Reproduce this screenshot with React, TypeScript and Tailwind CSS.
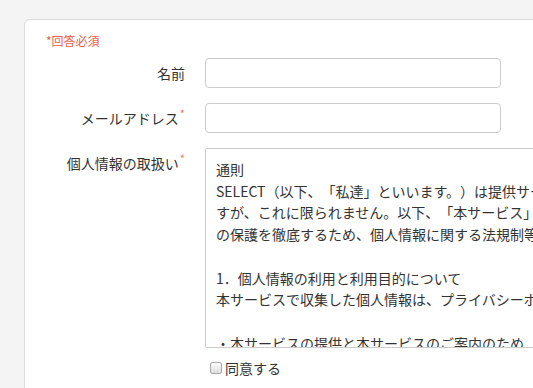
const policyText = [
  "通則",
  "SELECT（以下、「私達」といいます。）は提供サービス（ウェブサイト、アプリケーション等を含みま",
  "すが、これに限られません。以下、「本サービス」といいます。）において、利用者の個人情報",
  "の保護を徹底するため、個人情報に関する法規制等を遵守します。",
  "",
  "1．個人情報の利用と利用目的について",
  "本サービスで収集した個人情報は、プライバシーポリシーに定める以下の目的で利用します。",
  "",
  "・本サービスの提供と本サービスのご案内のため",
  "・お問い合わせへの対応のため",
].join("\n");

const Req = () => (
  <span className="relative -top-[6px] ml-[1px] text-[11px] leading-none text-[#ef7b68]">*</span>
);

const Label = ({ text, required }: { text: string; required?: boolean }) => (
  <div className="w-[139px] shrink-0 pt-[5px] text-right text-[14px] leading-[20px] text-[#333]">
    {text}
    {required && <Req />}
  </div>
);

export default function App() {
  return (
    <div
      className="h-screen w-screen overflow-hidden bg-[#f4f4f4] pt-[19px] pl-[24px] [text-spacing-trim:space-all]"
      style={{ fontFamily: '"Noto Sans CJK JP", "Noto Sans", sans-serif' }}
    >
      <div className="w-[700px] h-[600px] rounded-tl-[6px] border border-[#dcdcdc] bg-white pt-[13px] pl-[21px]">
        <p className="text-[12px] leading-[16px] text-[#e9604a]">*回答必須</p>

        <div className="mt-[9px] flex flex-col gap-[15px]">
          {/* name */}
          <div className="flex items-start gap-[20px]">
            <Label text="名前" />
            <input
              type="text"
              className="h-[30px] w-[296px] rounded-[4px] border border-[#cccccc] bg-white px-2 text-[14px] outline-none"
            />
          </div>

          {/* email */}
          <div className="flex items-start gap-[20px]">
            <Label text="メールアドレス" required />
            <input
              type="email"
              className="h-[30px] w-[296px] rounded-[4px] border border-[#cccccc] bg-white px-2 text-[14px] outline-none"
            />
          </div>

          {/* privacy */}
          <div className="flex items-start gap-[20px]">
            <Label text="個人情報の取扱い" required />
            <div>
              <textarea
                readOnly
                wrap="off"
                value={policyText}
                className="block h-[200px] w-[460px] resize-none overflow-hidden rounded-[2px] border border-[#cccccc] bg-white px-[10px] py-[10px] text-[14px] leading-[21.7px] text-[#333] outline-none [text-spacing-trim:space-all]"
              />
              <label className="mt-[10px] ml-[5px] flex items-center gap-[3px] text-[14px] leading-[20px] text-[#333]">
                <span className="inline-block h-[12px] w-[12px] rounded-[2px] border border-[#a9a9a9] bg-gradient-to-b from-[#fcfcfc] to-[#dedede]" />
                同意する
              </label>
            </div>
          </div>
        </div>
      </div>
    </div>
  );
}
